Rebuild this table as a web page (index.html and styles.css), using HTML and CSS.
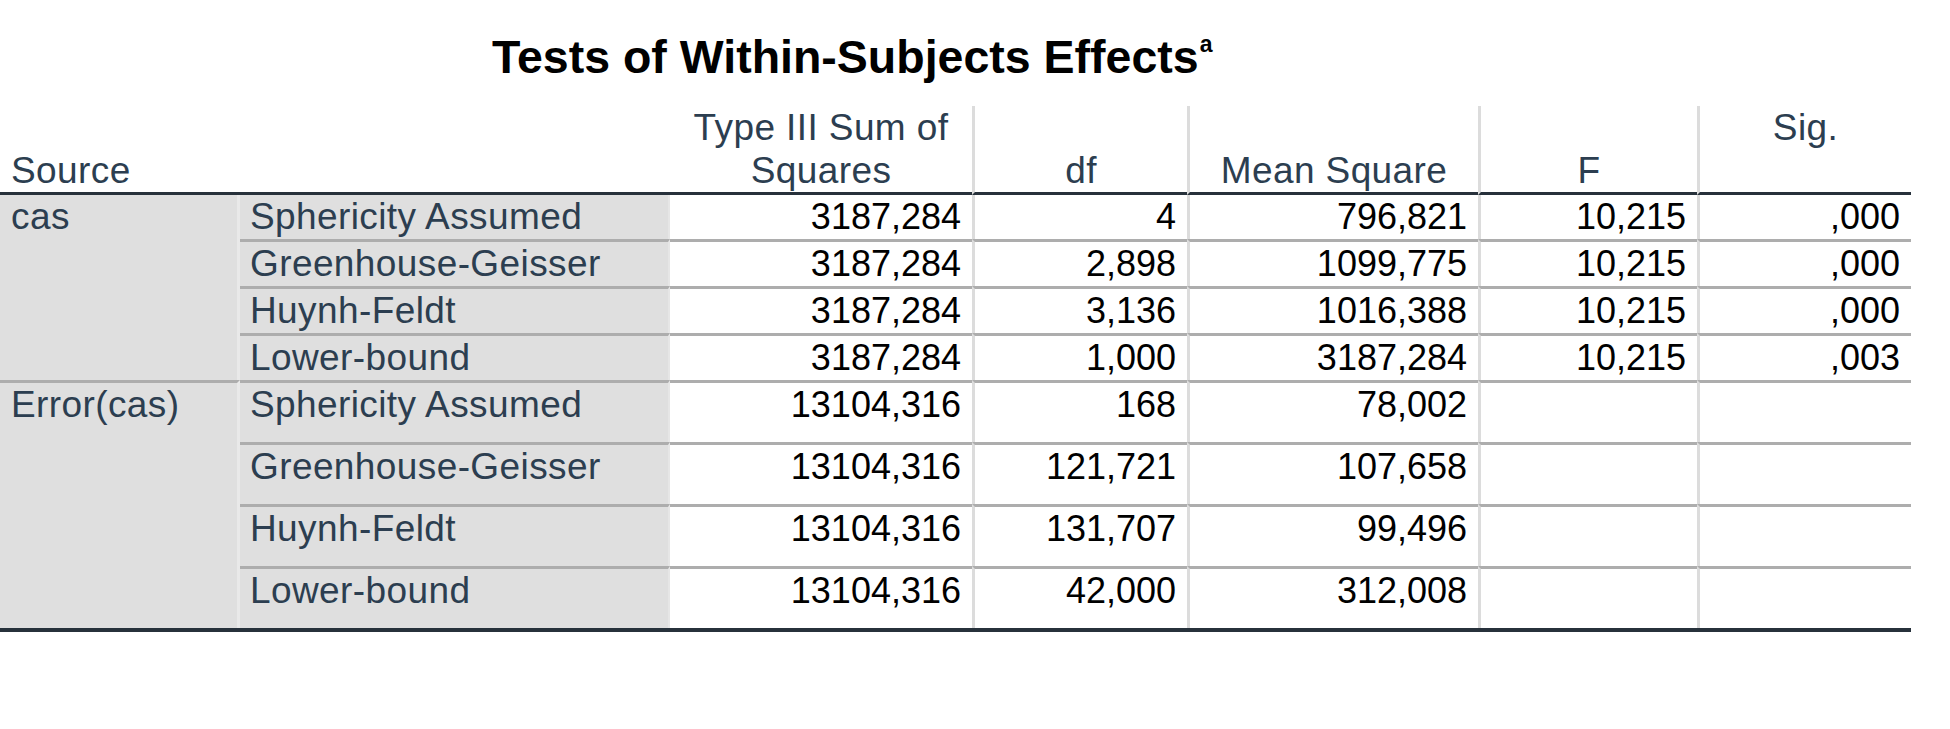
FILE: index.html
```html
<!DOCTYPE html>
<html lang="en">
<head>
<meta charset="utf-8">
<title>Tests of Within-Subjects Effects</title>
<link rel="stylesheet" href="styles.css">
</head>
<body>
<div class="page">
  <h1 class="title">Tests of Within-Subjects Effects<sup class="fn">a</sup></h1>
  <table class="stats">
    <colgroup>
      <col class="c1"><col class="c2"><col class="c3"><col class="c4"><col class="c5"><col class="c6"><col class="c7">
    </colgroup>
    <thead>
      <tr>
        <th class="src" colspan="2">Source</th>
        <th>Type III Sum of<br>Squares</th>
        <th class="v">df</th>
        <th class="v">Mean Square</th>
        <th class="v">F</th>
        <th class="v top">Sig.</th>
      </tr>
    </thead>
    <tbody>
      <tr>
        <td class="grp" rowspan="4">cas</td>
        <td class="lab">Sphericity Assumed</td>
        <td class="num">3187,284</td>
        <td class="num v">4</td>
        <td class="num v">796,821</td>
        <td class="num v">10,215</td>
        <td class="num v">,000</td>
      </tr>
      <tr class="sep">
        <td class="lab">Greenhouse-Geisser</td>
        <td class="num">3187,284</td>
        <td class="num v">2,898</td>
        <td class="num v">1099,775</td>
        <td class="num v">10,215</td>
        <td class="num v">,000</td>
      </tr>
      <tr class="sep">
        <td class="lab">Huynh-Feldt</td>
        <td class="num">3187,284</td>
        <td class="num v">3,136</td>
        <td class="num v">1016,388</td>
        <td class="num v">10,215</td>
        <td class="num v">,000</td>
      </tr>
      <tr class="sep">
        <td class="lab">Lower-bound</td>
        <td class="num">3187,284</td>
        <td class="num v">1,000</td>
        <td class="num v">3187,284</td>
        <td class="num v">10,215</td>
        <td class="num v">,003</td>
      </tr>
      <tr class="sep err">
        <td class="grp" rowspan="4">Error(cas)</td>
        <td class="lab">Sphericity Assumed</td>
        <td class="num">13104,316</td>
        <td class="num v">168</td>
        <td class="num v">78,002</td>
        <td class="num v"></td>
        <td class="num v"></td>
      </tr>
      <tr class="sep err">
        <td class="lab">Greenhouse-Geisser</td>
        <td class="num">13104,316</td>
        <td class="num v">121,721</td>
        <td class="num v">107,658</td>
        <td class="num v"></td>
        <td class="num v"></td>
      </tr>
      <tr class="sep err">
        <td class="lab">Huynh-Feldt</td>
        <td class="num">13104,316</td>
        <td class="num v">131,707</td>
        <td class="num v">99,496</td>
        <td class="num v"></td>
        <td class="num v"></td>
      </tr>
      <tr class="sep err">
        <td class="lab">Lower-bound</td>
        <td class="num">13104,316</td>
        <td class="num v">42,000</td>
        <td class="num v">312,008</td>
        <td class="num v"></td>
        <td class="num v"></td>
      </tr>
    </tbody>
  </table>
</div>
</body>
</html>
```
FILE: styles.css
```css
html, body {
  margin: 0;
  padding: 0;
  background: #ffffff;
}

.page {
  width: 1950px;
  font-family: "Liberation Sans", Arial, sans-serif;
}

.title {
  margin: 27px 0 0 0;
  padding-left: 492px;
  height: 60px;
  font-size: 46.5px;
  line-height: 60px;
  font-weight: bold;
  color: #000000;
  white-space: nowrap;
}

.fn {
  font-size: 23px;
  line-height: 0;
  vertical-align: 21px;
  margin-left: 1px;
}

.stats {
  margin-top: 19px;
  width: 1911px;
  table-layout: fixed;
  border-collapse: separate;
  border-spacing: 0;
  border-bottom: 4px solid #27313b;
  font-size: 36px;
}

.c1 { width: 240px; }
.c2 { width: 430px; }
.c3 { width: 302px; }
.c4 { width: 215px; }
.c5 { width: 291px; }
.c6 { width: 219px; }
.c7 { width: 214px; }

.stats th {
  font-weight: normal;
  font-size: 37px;
  letter-spacing: 0.4px;
  color: #2c3e50;
  line-height: 43px;
  padding: 0 6px;
  text-align: center;
  vertical-align: bottom;
  border-bottom: 3px solid #27313b;
  white-space: nowrap;
}

.stats th.src {
  text-align: left;
  padding-left: 11px;
}

.stats th.top {
  vertical-align: top;
}

.stats td {
  line-height: 32px;
  padding: 6px 11px 6px 11px;
  vertical-align: top;
  white-space: nowrap;
  color: #000000;
}

.stats tr.err td {
  padding-bottom: 21px;
}

.stats .v {
  border-left: 3px solid #dcdcdc;
}

.stats tr.sep td {
  border-top: 3px solid #adadad;
}

.stats td.grp,
.stats td.lab {
  background: #dfdfdf;
  color: #2c3e50;
  font-size: 37px;
  letter-spacing: 0.4px;
}

.stats td.grp {
  padding: 6px 0 0 11px;
  border-right: 3px solid #e9e9e9;
}

.stats tr.err td.grp {
  padding-bottom: 0;
}

.stats td.lab {
  padding-left: 10px;
  border-right: 2px solid #e6e6e6;
}

.stats td.num {
  text-align: right;
}
```
